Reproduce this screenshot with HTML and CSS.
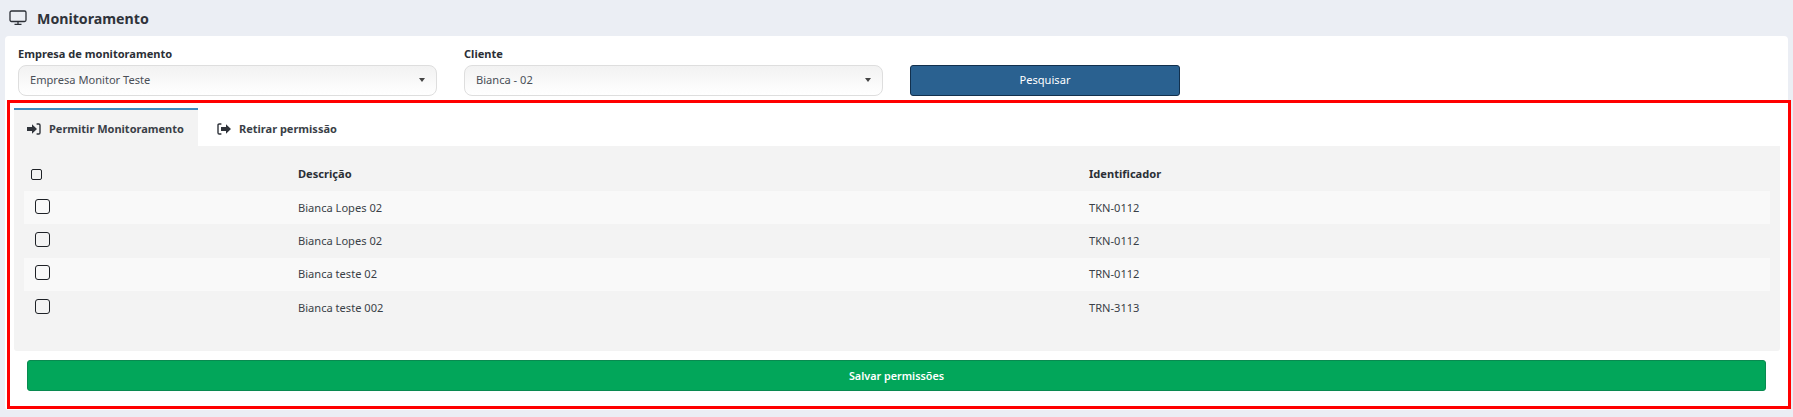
FILE: index.html
```html
<!DOCTYPE html>
<html lang="pt">
<head>
<meta charset="utf-8">
<title>Monitoramento</title>
<link rel="stylesheet" href="styles.css">
</head>
<body>
<header class="page-title">
  <svg class="monitor" viewBox="0 0 18 16" width="18" height="16"><rect x="1" y="1" width="16" height="10.5" rx="1.5" fill="none" stroke="#2b2f36" stroke-width="1.3"/><path d="M9 11.5v2.6M5.5 14.4h7" fill="none" stroke="#2b2f36" stroke-width="1.3"/></svg>
  <h1>Monitoramento</h1>
</header>
<main class="card">
  <form class="filters">
    <div class="field field-a">
      <label>Empresa de monitoramento</label>
      <div class="select"><span>Empresa Monitor Teste</span><i class="caret"></i></div>
    </div>
    <div class="field field-b">
      <label>Cliente</label>
      <div class="select"><span>Bianca - 02</span><i class="caret"></i></div>
    </div>
    <button type="button" class="search">Pesquisar</button>
  </form>
  <section class="tabs-wrap">
    <nav class="tabs">
      <div class="tab active">
        <svg class="tab-icon" viewBox="0 0 14 12" width="14" height="12"><path d="M0 4h5V1.200L10 6l-5 4.800V8H0z" fill="#2f333a"/><path d="M9.600 1h2.200c.7 0 1.200.5 1.200 1.200v7.600c0 .7-.5 1.200-1.200 1.200H9.600" fill="none" stroke="#2f333a" stroke-width="1.400"/></svg>
        <span>Permitir Monitoramento</span>
      </div>
      <div class="tab">
        <svg class="tab-icon" viewBox="0 0 14 12" width="14" height="12"><path d="M4.400 1H2.200C1.500 1 1 1.500 1 2.200v7.600c0 .7.5 1.200 1.200 1.200h2.200" fill="none" stroke="#2f333a" stroke-width="1.400"/><path d="M4 4h5V1.200L14 6l-5 4.800V8H4z" fill="#2f333a"/></svg>
        <span>Retirar permissão</span>
      </div>
    </nav>
    <div class="panel">
      <div class="row head">
        <div class="cell"><input type="checkbox" class="check small"></div>
        <div class="cell">Descrição</div>
        <div class="cell">Identificador</div>
      </div>
      <div class="row odd">
        <div class="cell"><input type="checkbox" class="check"></div>
        <div class="cell">Bianca Lopes 02</div>
        <div class="cell">TKN-0112</div>
      </div>
      <div class="row">
        <div class="cell"><input type="checkbox" class="check"></div>
        <div class="cell">Bianca Lopes 02</div>
        <div class="cell">TKN-0112</div>
      </div>
      <div class="row odd">
        <div class="cell"><input type="checkbox" class="check"></div>
        <div class="cell">Bianca teste 02</div>
        <div class="cell">TRN-0112</div>
      </div>
      <div class="row">
        <div class="cell"><input type="checkbox" class="check"></div>
        <div class="cell">Bianca teste 002</div>
        <div class="cell">TRN-3113</div>
      </div>
    </div>
    <button type="button" class="save">Salvar permissões</button>
  </section>
  <div class="highlight"></div>
</main>
</body>
</html>
```

FILE: styles.css
```css
* { box-sizing: border-box; }
html, body { margin: 0; padding: 0; }
body {
  width: 1793px;
  height: 417px;
  overflow: hidden;
  background: #ebeef4;
  color: #3a3f47;
  font-family: "Noto Sans", "Open Sans", sans-serif;
  font-size: 11.1px;
}
.page-title {
  height: 36px;
  display: flex;
  align-items: center;
  gap: 10px;
  padding: 0 0 0 9px;
}
.monitor { flex: none; }
.page-title h1 {
  margin: 0;
  font-size: 14.2px;
  font-weight: 700;
  color: #2f333a;
}
.card {
  position: relative;
  margin: 0 5px;
  height: 374px;
  background: #fff;
  border-radius: 4px;
}
.filters {
  display: flex;
  align-items: flex-end;
  padding: 10px 0 0 13px;
  height: 60px;
}
.field { display: flex; flex-direction: column; }
.field-a { width: 419px; margin-right: 27px; }
.field-b { width: 419px; margin-right: 27px; }
.field label {
  height: 19px;
  line-height: 16px;
  font-size: 11.05px;
  font-weight: 700;
  color: #2b2f36;
}
.select {
  height: 31px;
  display: flex;
  align-items: center;
  justify-content: space-between;
  padding: 0 11px 2px 11px;
  border: 1px solid #dedede;
  border-radius: 8px;
  background: linear-gradient(#f2f2f2, #ffffff);
  color: #4a4f57;
}
.caret {
  width: 0;
  height: 0;
  border-left: 3.500px solid transparent;
  border-right: 3.500px solid transparent;
  border-top: 4px solid #444;
}
.search {
  width: 270px;
  height: 31px;
  padding: 0 0 2px;
  border: 1px solid #12304d;
  border-radius: 3px;
  background: #2a6190;
  color: #fff;
  font: inherit;
}
.tabs-wrap { margin: 12px 8px 0 9px; }
.tabs { display: flex; height: 38px; }
.tab {
  display: flex;
  align-items: center;
  gap: 8px;
  padding: 1px 0 0 14px;
  border-top: 2px solid transparent;
  font-weight: 700;
  font-size: 11px;
  color: #3a3f47;
}
.tab.active {
  width: 184px;
  background: #f3f3f3;
  border-top-color: #3f8dbf;
  padding-left: 13px;
}
.tab-icon { flex: none; }
.tab:not(.active) { padding-left: 19px; }
.panel {
  height: 205px;
  padding: 0 10px;
  background: #f3f3f3;
  border-radius: 0 0 3px 3px;
}
.row {
  display: grid;
  grid-template-columns: 266px 791px 1fr;
  height: 33.300px;
  align-items: center;
}
.row.head {
  height: 45px;
  font-weight: 700;
  color: #2b2f36;
  padding-top: 10px;
}
.row.odd { background: #f9f9f9; }
.cell { padding: 0 0 1px 8px; }
.check {
  appearance: none;
  display: block;
  margin: -2px 0 0 3px;
  width: 15px;
  height: 15px;
  border: 1.500px solid #1e2126;
  border-radius: 3px;
  background: transparent;
}
.check.small {
  width: 11px;
  height: 11px;
  margin: 2px 0 0 -1px;
  border-radius: 2px;
}
.save {
  display: block;
  width: 1739px;
  height: 31px;
  margin: 9px 0 0 13px;
  padding: 0 0 1px;
  border: 1px solid #098a50;
  border-radius: 3px;
  background: #02a65a;
  color: #fff;
  font: inherit;
  font-size: 10.8px;
  font-weight: 600;
}
.highlight {
  position: absolute;
  left: 2px;
  top: 64px;
  width: 1784px;
  height: 309px;
  border: 3px solid #ff0000;
  pointer-events: none;
}
```
